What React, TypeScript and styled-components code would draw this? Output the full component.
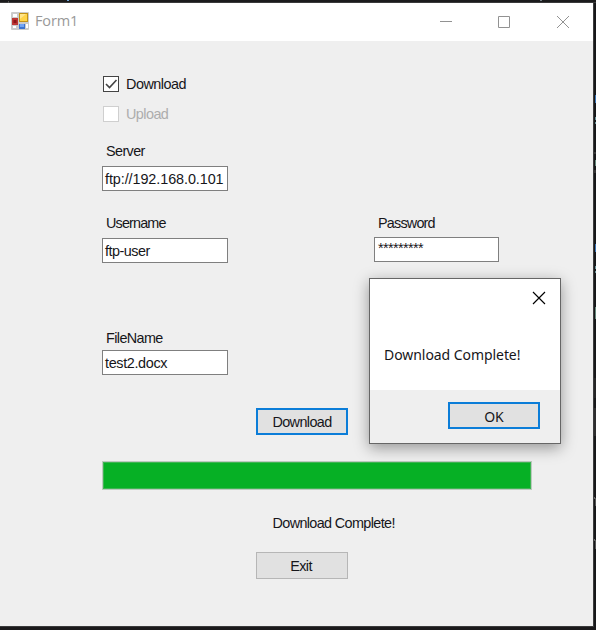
import React from "react";
import styled, { createGlobalStyle, css } from "styled-components";

const GlobalStyle = createGlobalStyle`
  * { box-sizing: border-box; }
  body { margin: 0; background: #1b1b1c; overflow: hidden; }
`;

const Desktop = styled.div`
  position: relative;
  width: 596px;
  height: 630px;
  padding-top: 3px;
  background: linear-gradient(#1b1b1c 0 2px, #3a3a3b 2px 3px, #17181a 3px 627px, #1a191b 627px);
  overflow: hidden;
  font-family: "Liberation Sans", Arial, sans-serif;
  color: #16161a;
`;

const BackdropMark = styled.i<{ $x: number; $y: number; $w: number; $h: number; $color: string }>`
  position: absolute;
  left: ${(p) => p.$x}px;
  top: ${(p) => p.$y}px;
  width: ${(p) => p.$w}px;
  height: ${(p) => p.$h}px;
  background: ${(p) => p.$color};
`;

const Window = styled.main`
  width: 594px;
  height: 624px;
  border-right: 1px solid #3c3c3d;
  border-bottom: 1px solid #3a3a3b;
  background: #efefef;
`;

const TitleBar = styled.header`
  display: flex;
  align-items: center;
  height: 38px;
  padding-left: 11px;
  background: #fff;
`;

const AppIcon = styled.svg`
  width: 18px;
  height: 18px;
  margin-top: -2px;
`;

const Text = styled.span<{ $spacing?: number; $size?: number }>`
  display: block;
  font-size: ${(p) => p.$size ?? 14.4}px;
  line-height: 18px;
  letter-spacing: ${(p) => p.$spacing ?? 0}px;
  white-space: pre;
`;

const Title = styled(Text)`
  flex: 1;
  margin: 0 0 2px 6px;
  font-family: "Open Sans", "Noto Sans", sans-serif;
  color: #999;
`;

const WindowControls = styled.svg`
  width: 158px;
  height: 38px;
  fill: none;
  stroke: #929292;
`;

const Form = styled.section`
  display: flex;
  flex-direction: column;
  align-items: flex-start;
  padding: 34px 61px 0 102px;
`;

const CheckRow = styled.label<{ $disabled?: boolean }>`
  display: flex;
  align-items: center;
  gap: 7px;
  height: 18px;
  margin: 0 0 12px 1px;
  color: ${(p) => (p.$disabled ? "#adadad" : "inherit")};
`;

const CheckBox = styled.span<{ $disabled?: boolean }>`
  display: flex;
  width: 16px;
  height: 16px;
  border: 1px solid ${(p) => (p.$disabled ? "#cfcfcf" : "#444")};
  background: #fff;
`;

const FieldRow = styled.div<{ $top: number }>`
  display: flex;
  align-items: flex-start;
  gap: 146px;
  margin-top: ${(p) => p.$top}px;
`;

const Field = styled.label<{ $gap: number; $width?: number }>`
  display: flex;
  flex-direction: column;
  gap: ${(p) => p.$gap}px;
  width: ${(p) => p.$width ?? 126}px;
`;

const FieldLabel = styled(Text)`
  margin-left: 4px;
`;

const TextBox = styled.span`
  display: flex;
  align-items: center;
  height: 25px;
  padding-left: 2px;
  border: 1px solid #7f7f7f;
  background: #fff;
  overflow: hidden;
`;

const Masked = styled(Text)`
  margin: -4px 0 0 1px;
`;

const Button = styled.button<{ $primary?: boolean; $top?: number; $left?: number }>`
  display: flex;
  align-items: center;
  justify-content: center;
  width: 92px;
  height: 27px;
  margin: ${(p) => p.$top ?? 0}px 0 0 ${(p) => p.$left ?? 0}px;
  padding: 0 2px 0 0;
  border: 1px solid #b6b6b6;
  background: #e1e1e1;
  color: inherit;
  font-family: inherit;
  ${(p) =>
    p.$primary &&
    css`
      padding: 0;
      border: 2px solid #0b7dd8;
    `}
`;

const Progress = styled.div`
  width: 430px;
  height: 29px;
  margin-top: 26px;
  border: 1px solid #bccabf;
  background: #06b025;
  box-shadow: inset 0 0 0 1px #3eb552;
`;

const Status = styled(Text)`
  margin: 24px 0 0 170.5px;
`;

const Dialog = styled.section`
  position: absolute;
  left: 369px;
  top: 278px;
  display: flex;
  flex-direction: column;
  width: 192px;
  height: 166px;
  border: 1px solid #666;
  background: #fff;
  box-shadow: 0 4px 14px rgba(0, 0, 0, 0.38);
`;

const DialogClose = styled.svg`
  align-self: flex-end;
  width: 14px;
  height: 14px;
  margin: 12px 14px 0 0;
  fill: none;
  stroke: #000;
  stroke-width: 1.15;
`;

const DialogMessage = styled(Text)`
  margin: 41px 0 0 14px;
  font-family: "Noto Sans", "Open Sans", sans-serif;
`;

const DialogFooter = styled.footer`
  display: flex;
  justify-content: flex-end;
  height: 53px;
  margin-top: auto;
  padding: 12px 20px 0 0;
  background: #efefef;
`;

const OkText = styled(Text)`
  margin-top: 2px;
  font-family: "Noto Sans", "Open Sans", sans-serif;
`;

export default function App() {
  return (
    <Desktop>
      <GlobalStyle />
      <Window>
        <TitleBar>
          <AppIcon viewBox="0 0 18 18">
            <rect width="18" height="18" rx="1" fill="#cbcbcb" />
            <path d="M2 2h4v3H2zM2 14h3v2H2zM15 12h2v4h-2z" fill="#fff" />
            <rect x="1" y="6" width="6" height="7" fill="#bd3634" />
            <rect x="2.5" y="8" width="3" height="3" fill="#8c1517" />
            <rect x="8" y="1" width="9" height="9" fill="#c29216" />
            <rect x="9" y="2" width="7" height="7" fill="#ffd449" />
            <path d="M9 2h6L9 7z" fill="#ffe58b" />
            <rect x="8" y="12" width="6" height="5" fill="#3c73cf" />
            <rect x="9" y="12" width="4" height="3" fill="#72a4f4" />
          </AppIcon>
          <Title $size={14.5} $spacing={-0.15}>Form1</Title>
          <WindowControls viewBox="0 0 158 38">
            <path d="M5 18.5h12M63.500 13.500h11v11h-11zM122 13l12 12M134 13l-12 12" />
          </WindowControls>
        </TitleBar>
        <Form>
          <CheckRow>
            <CheckBox>
              <svg width="14" height="14" fill="none" stroke="#444" strokeWidth="1.6">
                <path d="M2 7l3.500 3.500L12.500 3" />
              </svg>
            </CheckBox>
            <Text $spacing={-0.5}>Download</Text>
          </CheckRow>
          <CheckRow $disabled>
            <CheckBox $disabled />
            <Text $spacing={-0.55}>Upload</Text>
          </CheckRow>
          <FieldRow $top={7}>
            <Field $gap={6}>
              <FieldLabel $spacing={-0.6}>Server</FieldLabel>
              <TextBox><Text $spacing={-0.08}>ftp://192.168.0.101</Text></TextBox>
            </Field>
          </FieldRow>
          <FieldRow $top={23}>
            <Field $gap={6}>
              <FieldLabel $spacing={-0.85}>Username</FieldLabel>
              <TextBox><Text $spacing={-0.5}>ftp-user</Text></TextBox>
            </Field>
            <Field $gap={5} $width={125}>
              <FieldLabel $spacing={-0.8}>Password</FieldLabel>
              <TextBox><Masked $spacing={-0.6}>*********</Masked></TextBox>
            </Field>
          </FieldRow>
          <FieldRow $top={66}>
            <Field $gap={3}>
              <FieldLabel $spacing={-0.6}>FileName</FieldLabel>
              <TextBox><Text $spacing={-0.35}>test2.docx</Text></TextBox>
            </Field>
          </FieldRow>
          <Button $primary $top={33} $left={154}><Text $spacing={-0.6}>Download</Text></Button>
          <Progress />
          <Status $spacing={-0.63}>Download Complete!</Status>
          <Button $top={20} $left={154}><Text $spacing={-0.6}>Exit</Text></Button>
        </Form>
      </Window>
      <BackdropMark $x={67} $y={0} $w={2} $h={1} $color="#72a7d9" />
      <BackdropMark $x={540} $y={0} $w={2} $h={1} $color="#737c84" />
      <BackdropMark $x={8} $y={1} $w={1} $h={2} $color="#555" />
      <BackdropMark $x={595} $y={95} $w={1} $h={8} $color="#3973b5" />
      <BackdropMark $x={595} $y={117} $w={1} $h={3} $color="#679096" />
      <BackdropMark $x={595} $y={122} $w={1} $h={2} $color="#679096" />
      <BackdropMark $x={594} $y={152} $w={2} $h={2} $color="#353536" />
      <BackdropMark $x={595} $y={160} $w={1} $h={6} $color="#65877a" />
      <BackdropMark $x={594} $y={170} $w={2} $h={3} $color="#353536" />
      <BackdropMark $x={595} $y={244} $w={1} $h={8} $color="#3973b5" />
      <BackdropMark $x={595} $y={266} $w={1} $h={3} $color="#679096" />
      <BackdropMark $x={595} $y={271} $w={1} $h={2} $color="#679096" />
      <BackdropMark $x={595} $y={307} $w={1} $h={12} $color="#65877a" />
      <BackdropMark $x={594} $y={378} $w={2} $h={20} $color="#252526" />
      <BackdropMark $x={594} $y={408} $w={2} $h={28} $color="#2d2d2e" />
      <BackdropMark $x={594} $y={497} $w={1} $h={2} $color="#666" />
      <BackdropMark $x={595} $y={498} $w={1} $h={8} $color="#555" />
      <BackdropMark $x={594} $y={539} $w={1} $h={2} $color="#666" />
      <BackdropMark $x={595} $y={540} $w={1} $h={9} $color="#555" />
      <Dialog>
        <DialogClose viewBox="0 0 14 14"><path d="M1 1l12 12M13 1L1 13" /></DialogClose>
        <DialogMessage $size={14} $spacing={-0.06}>Download Complete!</DialogMessage>
        <DialogFooter>
          <Button $primary><OkText $size={14}>OK</OkText></Button>
        </DialogFooter>
      </Dialog>
    </Desktop>
  );
}
